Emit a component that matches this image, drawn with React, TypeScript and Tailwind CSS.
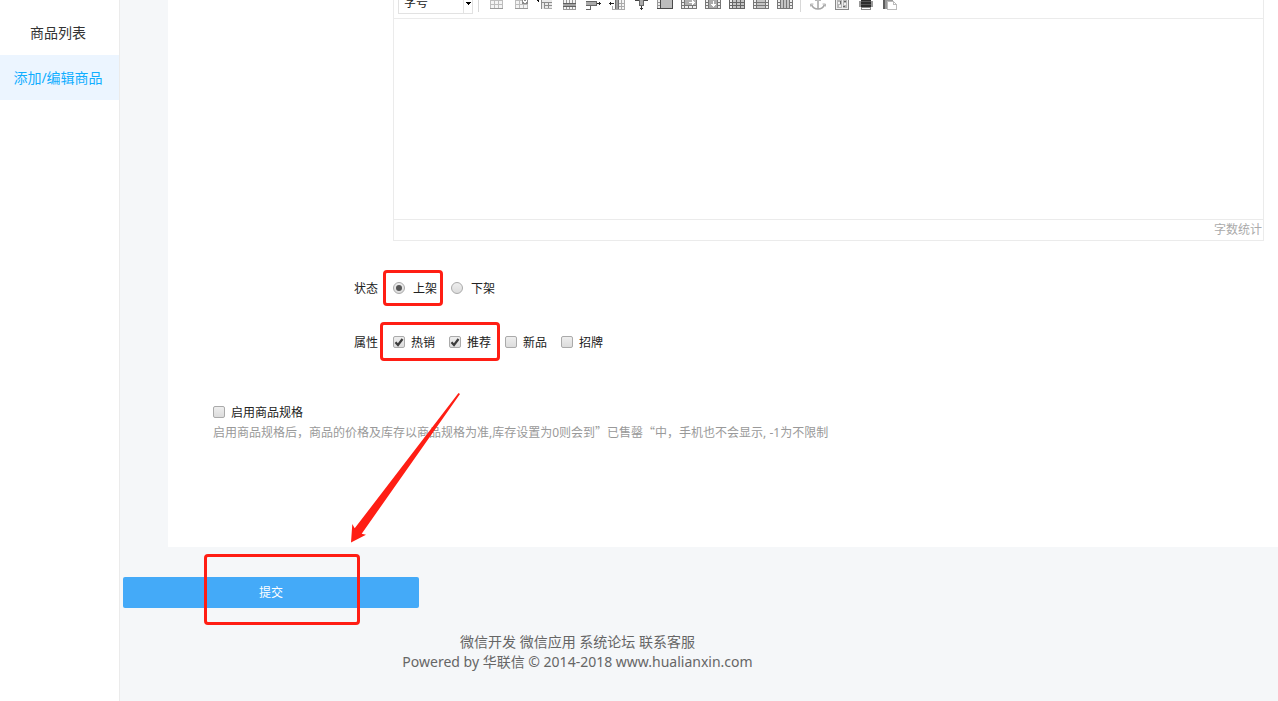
import { ReactNode, useState } from "react";

const tools: { name: string; art: ReactNode }[] = [
  {
    name: "插入表格",
    art: (
      <>
        <path d="M1 0h13v9H1z" fill="#f4f4f4" />
        <path d="M1.500 0v9M5.500 0v9M9.500 0v9M13.500 0v9M1 .500h13M1 4.500h13" stroke="#bdbdbd" />
        <path d="M1 8.500h13" stroke="#999" />
      </>
    ),
  },
  {
    name: "删除表格",
    art: (
      <>
        <path d="M2 0h13v9H2z" fill="#f4f4f4" />
        <path d="M2.500 0v9M6.500 0v9M10.500 4v5M14.500 4v5M2 .500h7M2 4.500h13" stroke="#bdbdbd" />
        <path d="M2 8.500h13" stroke="#999" />
        <path d="M9 0h6v4H9z" fill="#8b8b8b" />
        <path d="M10 0h1v2h-1zM13 0h1v2h-1zM11 1h2v2h-2z" fill="#fff" />
      </>
    ),
  },
  {
    name: "表格前插入行",
    art: (
      <>
        <path d="M0 .500h2M1.500 0v2" stroke="#111" />
        <path d="M4 0h11v9H4z" fill="#e9e9e9" />
        <path d="M4.500 0v9M7.500 3v6M11.500 3v6M4 2.500h11M7 5.500h8" stroke="#8c8c8c" />
        <path d="M7 8.500h8" stroke="#aaa" />
      </>
    ),
  },
  {
    name: "前插入行",
    art: (
      <>
        <path d="M2 0h13v10H2z" fill="#f4f4f4" />
        <path d="M2.500 0v10M5.500 0v10M8.500 0v10M11.500 0v10M14.500 0v10M2 9.500h13" stroke="#999" />
        <path d="M2 3h13v4H2z" fill="#a2a2a2" />
        <path d="M2 3.500h13M2 6.500h13" stroke="#606060" />
      </>
    ),
  },
  {
    name: "删除行",
    art: (
      <>
        <path d="M1 1h11v5H1z" fill="#aaa" />
        <path d="M1 1.500h10.500v4H1M5.500 6v3.500H1" stroke="#666" fill="none" />
        <path d="M12 3.500h4M14.500 2v3" stroke="#222" />
      </>
    ),
  },
  {
    name: "前插入列",
    art: (
      <>
        <path d="M0 3.500h5M1.500 2v3" stroke="#222" />
        <path d="M6 0h10v10H6z" fill="#f4f4f4" />
        <path d="M3 9.500h13M12.500 0v10M15.500 0v10M3.500 6v4M10 3.500h6M10 6.500h6" stroke="#aaa" />
        <path d="M6 0h4v9H6z" fill="#a2a2a2" />
        <path d="M6.500 0v9M9.500 0v9" stroke="#707070" />
      </>
    ),
  },
  {
    name: "删除列",
    art: (
      <>
        <path d="M2 .500h4M10 .500h5" stroke="#444" />
        <path d="M6 0h5v5H6z" fill="#aaa" />
        <path d="M6.500 0v5.500h4V0" stroke="#666" fill="none" />
        <path d="M8.500 6v4M7 8.500h3" stroke="#333" />
      </>
    ),
  },
  {
    name: "合并多个单元格",
    art: (
      <>
        <path d="M0 0h16v9H0z" fill="#eee" />
        <path d="M.500 0v9M0 2.500h4M0 5.500h4" stroke="#999" />
        <path d="M4 0h11v8H4z" fill="#bdbdbd" />
        <path d="M3.500 0v8M0 8.500h16M15.500 0v9" stroke="#4a4a4a" />
      </>
    ),
  },
  {
    name: "右合并单元格",
    art: (
      <>
        <path d="M0 0h16v9H0z" fill="#eee" />
        <path d="M4 0h11v5H4z" fill="#b0b0b0" />
        <path d="M.500 0v9M3.500 0v9M15.500 0v9M0 2.500h4M0 5.500h16M0 8.500h16M7.500 6v3M11.500 6v3" stroke="#777" />
        <path d="M8 2.500h6M12.500 1v3M11.500 0v5" stroke="#fff" />
      </>
    ),
  },
  {
    name: "下合并单元格",
    art: (
      <>
        <path d="M0 0h16v9H0z" fill="#eee" />
        <path d="M4 0h8v9H4z" fill="#aaa" />
        <path d="M.500 0v9M3.500 0v9M12.500 0v9M15.500 0v9M0 2.500h4M0 5.500h4M12 2.500h4M12 5.500h4M0 8.500h16" stroke="#777" />
        <path d="M8.500 1v6M6 4.500h5M7 5.500h3" stroke="#fff" />
      </>
    ),
  },
  {
    name: "拆分成行",
    art: (
      <>
        <path d="M0 0h16v9H0z" fill="#c4c4c4" />
        <path d="M.500 0v9M3.500 0v9M7.500 0v9M11.500 0v9M15.500 0v9M0 2.500h16M0 5.500h16M0 8.500h16" stroke="#666" />
        <path d="M1 0h2v2H1zM1 3h2v2H1zM1 6h2v2H1z" fill="#eee" />
      </>
    ),
  },
  {
    name: "拆分成列",
    art: (
      <>
        <path d="M0 0h16v9H0z" fill="#eee" />
        <path d="M4 0h8v8H4z" fill="#c4c4c4" />
        <path d="M.500 0v9M3.500 0v9M12.500 0v9M15.500 0v9M0 2.500h16M0 5.500h16M0 8.500h16" stroke="#777" />
      </>
    ),
  },
  {
    name: "完全拆分单元格",
    art: (
      <>
        <path d="M0 0h16v9H0z" fill="#eee" />
        <path d="M4 0h8v8H4z" fill="#c4c4c4" />
        <path d="M.500 0v9M3.500 0v9M6.500 0v9M9.500 0v9M12.500 0v9M15.500 0v9M0 2.500h4M0 5.500h4M12 2.500h4M12 5.500h4M0 8.500h16" stroke="#777" />
      </>
    ),
  },
];

const extras: { name: string; art: ReactNode }[] = [
  {
    name: "锚点",
    art: (
      <g shapeRendering="auto" fill="none">
        <path d="M1.500 4.500c1 3 3 4.500 6.500 4.500s5.500-1.500 6.500-4.500" stroke="#a6a6a6" strokeWidth="1.600" />
        <path d="M.500 6.500V4h3M15.500 6.500V4h-3M5 .500h6" stroke="#b5b5b5" />
        <path d="M8 0v8.500" stroke="#9a9a9a" strokeWidth="2" />
        <path d="M8 0v8" stroke="#ededed" strokeWidth=".800" />
      </g>
    ),
  },
  {
    name: "地图",
    art: (
      <>
        <path d="M1.500 -1v10.500h13V-1" fill="#eee" stroke="#888" />
        <path d="M3 0h10v8H3z" fill="#b5b5b5" />
        <path d="M4 2h2v2H4zM8 0h1v8H8zM10 3h2v2h-2zM5 5h2v2H5z" fill="#eee" />
        <path d="M6 1h1v3H6zM10 1h2v1h-2zM9 6h2v1H9z" fill="#666" />
      </>
    ),
  },
  {
    name: "打印",
    art: (
      <>
        <path d="M1 1h14v6H1z" fill="#999" />
        <path d="M3 0h10v7H3z" fill="#2c2c2c" />
        <path d="M3 1.500h10M3 4.500h10" stroke="#555" />
        <path d="M3.500 7.500h9v2h-9z" fill="#fff" stroke="#888" />
      </>
    ),
  },
  {
    name: "粘贴",
    art: (
      <>
        <path d="M1 0h10v9H1z" fill="#999" />
        <path d="M1 0h2v9H1z" fill="#5d5d5d" />
        <path d="M5.500 1.500h6l3 3v5h-9z" fill="#fff" stroke="#bbb" />
        <path d="M11.500 1.500v3h3" fill="none" stroke="#bbb" />
      </>
    ),
  },
];

function ToolButton({ name, children }: { name: string; children: ReactNode }) {
  return (
    <button type="button" aria-label={name} className="h-[10px] w-4 shrink-0">
      <svg viewBox="0 0 16 10" className="block h-[10px] w-4" shapeRendering="crispEdges">
        {children}
      </svg>
    </button>
  );
}

function Editor() {
  return (
    <div className="ml-[225px] mr-[14px] border-x border-b border-[#ebebeb]">
      <div className="flex h-[19px] items-start overflow-hidden border-b border-[#ebebeb] pl-1">
        <div className="relative flex h-[14px] w-[75px] shrink-0 items-end overflow-hidden border-x border-b border-[#e2e2e2]">
          <select
            aria-label="字号"
            className="block h-5 w-full shrink-0 appearance-none pl-[5px] text-xs leading-5 text-[#222] outline-none"
          >
            <option>字号</option>
          </select>
          <span className="pointer-events-none absolute right-0 top-0 flex h-[13px] w-[9px] justify-center border-l border-[#e2e2e2]">
            <svg viewBox="0 0 5 5" className="h-[5px] w-[5px]" shapeRendering="crispEdges">
              <path d="M0 2h5v1H4v1H3v1H2V4H1V3H0z" fill="#000" />
            </svg>
          </span>
        </div>
        <span className="ml-[5px] h-3 w-px bg-[#d8d8d8]" />
        <div className="ml-[10px] flex gap-2">
          {tools.map((tool) => (
            <ToolButton key={tool.name} name={tool.name}>
              {tool.art}
            </ToolButton>
          ))}
        </div>
        <span className="ml-[7px] h-3 w-px bg-[#d8d8d8]" />
        <div className="ml-[9px] flex gap-2">
          {extras.map((tool) => (
            <ToolButton key={tool.name} name={tool.name}>
              {tool.art}
            </ToolButton>
          ))}
        </div>
      </div>
      <textarea aria-label="商品详情" className="block h-[200px] w-full resize-none outline-none" />
      <div className="h-[21px] border-t border-[#ebebeb] pr-px text-right text-xs leading-5 text-[#aaa]">
        字数统计
      </div>
    </div>
  );
}

function Check({ label, checked = false }: { label: string; checked?: boolean }) {
  const [on, setOn] = useState(checked);

  return (
    <label className="flex items-center gap-[6px]">
      <span className="relative mb-[2px] flex h-3 w-3">
        <input
          type="checkbox"
          checked={on}
          onChange={(e) => setOn(e.target.checked)}
          className="h-3 w-3 appearance-none rounded-[2px] border border-[#aaa] bg-linear-to-b from-[#eee] to-[#dcdcdc]"
        />
        {on && (
          <svg viewBox="0 0 12 12" className="pointer-events-none absolute inset-0 h-3 w-3">
            <path d="M2.500 6.200l2.500 2.800L9.500 3" fill="none" stroke="#3c3c3c" strokeWidth="2.200" />
          </svg>
        )}
      </span>
      {label}
    </label>
  );
}

function Radio({ label, checked = false }: { label: string; checked?: boolean }) {
  return (
    <label className="flex items-center gap-2">
      <input
        type="radio"
        name="status"
        defaultChecked={checked}
        className="mb-[2px] flex h-3 w-3 appearance-none items-center justify-center rounded-full border border-[#aaa] bg-linear-to-b from-[#eee] to-[#dcdcdc] checked:before:h-[6px] checked:before:w-[6px] checked:before:rounded-full checked:before:bg-[#555]"
      />
      {label}
    </label>
  );
}

function Annotations() {
  return (
    <div className="pointer-events-none absolute inset-0">
      <div className="absolute left-[383px] top-[270px] h-9 w-[60px] rounded-[4px] border-3 border-[#ff1e14]" />
      <div className="absolute left-[380px] top-[322px] h-[39px] w-[120px] rounded-[4px] border-3 border-[#ff1e14]" />
      <div className="absolute left-[204px] top-[554px] h-[71px] w-[156px] rounded-[4px] border-3 border-[#ff1e14]" />
      <svg viewBox="0 0 112 152" className="absolute left-[349px] top-[392px] h-[152px] w-[112px]">
        <path d="M109.500 1L111 2L12.700 141.700L17 142.700L2 150.500L3.300 132L5.700 136.300Z" fill="#ff1e14" />
      </svg>
    </div>
  );
}

function App() {
  return (
    <div className="relative flex min-h-screen bg-[#f5f7f9] font-['Noto_Sans','Noto_Sans_CJK_SC',sans-serif] text-xs text-[#222]">
      <nav className="w-[120px] shrink-0 border-r border-[#ebebeb] bg-white pt-[10px] text-center text-sm leading-[45px]">
        <a href="#list" className="block pr-[3px] text-[#333]">
          商品列表
        </a>
        <a href="#edit" className="block bg-[#ecf5ff] pr-[3px] text-[#10aeff]">
          添加/编辑商品
        </a>
      </nav>
      <main className="min-w-0 flex-1">
        <form onSubmit={(e) => e.preventDefault()}>
          <div className="ml-12 bg-white pb-[104px]">
            <Editor />
            <fieldset className="mt-[38px] flex h-5 items-center pl-[186px]">
              <span className="mr-[15px]">状态</span>
              <div className="flex gap-[14px]">
                <Radio label="上架" checked />
                <Radio label="下架" />
              </div>
            </fieldset>
            <fieldset className="mt-[34px] flex h-5 items-center pl-[186px]">
              <span className="mr-[15px]">属性</span>
              <div className="flex gap-[14px]">
                <Check label="热销" checked />
                <Check label="推荐" checked />
                <Check label="新品" />
                <Check label="招牌" />
              </div>
            </fieldset>
            <div className="mt-[50px] pl-[45px] leading-5">
              <Check label="启用商品规格" />
              <p className="text-[#999]">
                启用商品规格后，商品的价格及库存以商品规格为准,库存设置为0则会到
                <span className="font-['Noto_Sans_CJK_SC',sans-serif] leading-4">”已售罄“</span>
                中，手机也不会显示, -1为不限制
              </p>
            </div>
          </div>
          <button
            type="submit"
            className="ml-[3px] mt-[30px] block h-[31px] w-[296px] rounded-[2px] bg-[#44aaf8] text-white"
          >
            提交
          </button>
        </form>
        <footer className="mt-6 w-[915px] text-center text-sm leading-5 text-[#666]">
          <p>
            <a href="#dev">微信开发</a> <a href="#app">微信应用</a> <a href="#bbs">系统论坛</a>{" "}
            <a href="#service">联系客服</a>
          </p>
          <p>Powered by 华联信 © 2014-2018 www.hualianxin.com</p>
        </footer>
      </main>
      <Annotations />
    </div>
  );
}

export default App;
